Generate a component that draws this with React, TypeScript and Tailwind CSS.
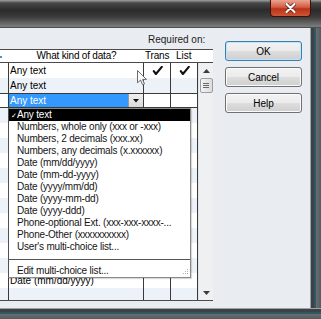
const items = [
  'Numbers, whole only (xxx or -xxx)',
  'Numbers, 2 decimals (xxx.xx)',
  'Numbers, any decimals (x.xxxxxx)',
  'Date (mm/dd/yyyy)',
  'Date (mm-dd-yyyy)',
  'Date (yyyy/mm/dd)',
  'Date (yyyy-mm-dd)',
  'Date (yyyy-ddd)',
  'Phone-optional Ext. (xxx-xxx-xxxx-...',
  'Phone-Other (xxxxxxxxxx)',
  "User's multi-choice list...",
]

// rows behind the popup list; index 14 is the one peeking out below it
const rowCount = 16

const Check = () => (
  <svg width="11" height="9" viewBox="0 0 11 9">
    <path d="M1.8 5.2 L3.9 8 L9.8 0.8" fill="none" stroke="#111" strokeWidth="2.1" strokeLinecap="round" strokeLinejoin="round" />
  </svg>
)

const Cursor = () => (
  <svg width="11" height="17" viewBox="0 0 11 17">
    <path d="M0.5 0.5 L0.5 12.8 L3.5 10 L5.6 14.8 L7.5 14 L5.5 9.4 L9.5 9.4 Z" fill="#fafafa" stroke="#6b6b6b" strokeWidth="1" strokeLinejoin="round" />
  </svg>
)

const Button = ({ label, primary }: { label: string; primary?: boolean }) => (
  <div
    className={
      'h-[20px] w-[77px] rounded-[3px] border flex items-center justify-center text-[10px] text-black bg-[linear-gradient(to_bottom,#f3f3f3_0%,#ebebeb_48%,#dddddd_52%,#cfcfcf_100%)] ' +
      (primary ? 'border-[#3c7fb1] shadow-[inset_0_0_0_1px_#bfe3f7]' : 'border-[#707070] shadow-[inset_0_0_0_1px_#fbfbfb]')
    }
  >
    {label}
  </div>
)

export default function App() {
  return (
    <div className="relative w-[321px] h-[319px] overflow-hidden flex flex-col font-['Liberation_Sans',Arial,sans-serif] text-black">
      {/* Title bar */}
      <div className="h-[28px] shrink-0 flex justify-end pr-[10px] border-b border-[#4a4f55] bg-[linear-gradient(to_bottom,#a0a0a0_0px,#474747_3px,#2b2b2b_10px,#3c3c3c_17px,#7e7e7e_27px)]">
        <div className="w-[41px] h-[17px] rounded-b-[4px] border border-t-0 border-[#3d1209] flex items-center justify-center bg-[linear-gradient(to_bottom,#e9a591_0%,#d45c41_45%,#b9321b_55%,#cf5534_100%)]">
          <svg width="11" height="10" viewBox="0 0 11 10">
            <path d="M1.5 1 L9.5 9 M9.5 1 L1.5 9" stroke="#5a1a0e" strokeWidth="3.6" strokeLinecap="round" />
            <path d="M1.5 1 L9.5 9 M9.5 1 L1.5 9" stroke="#ffffff" strokeWidth="2.2" strokeLinecap="round" />
          </svg>
        </div>
      </div>

      <div className="flex flex-1 min-h-0">
        {/* Dialog body */}
        <div className="w-[310px] bg-[#e9ecf1] flex">
          <div className="w-[213px] flex flex-col">
            <div className="h-[21px] shrink-0 pl-[148px] pt-[6px] text-[10px] leading-[11px] text-[#1b1b1b]">Required on:</div>

            <div className="relative h-[252px] shrink-0 flex flex-col border-t border-b border-[#4a4a4a] bg-white">
              {/* header */}
              <div className="h-[13px] shrink-0 flex border-b border-[#4a4a4a] text-[10px] leading-[12px]">
                <div className="w-[9px] relative">
                  <div className="absolute left-0 top-[6px] w-[2px] h-[2px] bg-[#4a8fd8]" />
                </div>
                <div className="w-[135px] text-center tracking-[-0.2px]">What kind of data?</div>
                <div className="w-[27px] overflow-hidden whitespace-nowrap pl-[1px] tracking-[-0.2px]">Trans</div>
                <div className="w-[27px] pl-[5px]">List</div>
              </div>

              {/* rows + scrollbar */}
              <div className="flex flex-1 min-h-0">
                <div className="w-[198px] flex flex-col overflow-hidden">
                  {Array.from({ length: rowCount }).map((_, i) => {
                    const stripe = i % 2 === 1 ? 'bg-[#edf1f8]' : 'bg-white'
                    if (i === 2) {
                      return (
                        <div key={i} className="h-[15px] shrink-0 flex border-t border-b border-[#3a3a3a] bg-white">
                          <div className="w-[9px] border-r border-[#3a3a3a]" />
                          <div className="w-[135px] flex border-r border-[#3a3a3a]">
                            <div className="w-[119px] bg-[#3399ff] text-white text-[10px] leading-[13px] pl-[1px]">Any text</div>
                            <div className="w-[15px] flex items-center justify-center bg-[linear-gradient(to_bottom,#f0f0f0,#d9d9d9)] border-l border-[#9a9a9a]">
                              <svg width="6" height="4" viewBox="0 0 6 4"><path d="M0 0 H6 L3 3.5 Z" fill="#111" /></svg>
                            </div>
                          </div>
                          <div className="w-[27px] border-r border-[#3a3a3a]" />
                          <div className="w-[27px] border-r border-[#3a3a3a]" />
                        </div>
                      )
                    }
                    return (
                      <div key={i} className={'h-[15px] shrink-0 flex ' + stripe}>
                        <div className="w-[9px] border-r border-[#3a3a3a]" />
                        <div className="w-[135px] border-r border-[#3a3a3a] text-[10px] leading-[15px] pl-[1px] whitespace-nowrap overflow-hidden">
                          {i < 2 || i === 14 ? (i === 14 ? 'Date (mm/dd/yyyy)' : 'Any text') : ''}
                        </div>
                        <div className="w-[27px] border-r border-[#3a3a3a] flex items-center justify-center">{i === 0 && <Check />}</div>
                        <div className="w-[27px] border-r border-[#3a3a3a] flex items-center justify-center">{i === 0 && <Check />}</div>
                      </div>
                    )
                  })}
                </div>

                {/* scrollbar */}
                <div className="w-[15px] flex flex-col items-center bg-[#eff0f2] border-l border-[#e2e3e5]">
                  <div className="h-[15px] flex items-center justify-center">
                    <svg width="7" height="4" viewBox="0 0 7 4"><path d="M0 4 H7 L3.5 0 Z" fill="#3c3c3c" /></svg>
                  </div>
                  <div className="w-[13px] h-[15px] rounded-[2px] border border-[#9b9ea3] bg-[linear-gradient(to_right,#f4f4f4,#dcdcdc)] flex flex-col items-center justify-center gap-[1px]">
                    <div className="w-[6px] h-[1px] bg-[#6a6a6a]" />
                    <div className="w-[6px] h-[1px] bg-[#6a6a6a]" />
                    <div className="w-[6px] h-[1px] bg-[#6a6a6a]" />
                  </div>
                  <div className="flex-1" />
                  <div className="h-[14px] flex items-center justify-center">
                    <svg width="7" height="4" viewBox="0 0 7 4"><path d="M0 0 H7 L3.5 4 Z" fill="#3c3c3c" /></svg>
                  </div>
                </div>
              </div>

              {/* popup list */}
              <div className="absolute left-[8px] top-[58px] w-[183px] h-[170px] bg-white border border-[#8a8a8a] border-l-[#505050] shadow-[1px_1px_1px_rgba(0,0,0,0.15)] flex flex-col text-[10px] leading-[12px] tracking-[-0.2px]">
                <div className="h-[12px] shrink-0 bg-black text-white flex items-center">
                  <span className="w-[8px] pl-[2px] text-[7px] leading-[7px]">✓</span>
                  <span>Any text</span>
                </div>
                {items.map((t) => (
                  <div key={t} className="h-[12px] shrink-0 pl-[8px] whitespace-nowrap overflow-hidden text-[#141414]">
                    {t}
                  </div>
                ))}
                <div className="h-[12px] shrink-0 flex items-center">
                  <div className="h-[1px] w-full bg-[#555]" />
                </div>
                <div className="h-[12px] shrink-0 pl-[8px] whitespace-nowrap text-[#141414]">Edit multi-choice list...</div>
                <div className="absolute right-[1px] bottom-[1px]">
                  <svg width="7" height="7" viewBox="0 0 7 7" fill="#b4b4b4">
                    <rect x="5" y="0" width="1" height="1" />
                    <rect x="3" y="2" width="1" height="1" />
                    <rect x="5" y="2" width="1" height="1" />
                    <rect x="1" y="4" width="1" height="1" />
                    <rect x="3" y="4" width="1" height="1" />
                    <rect x="5" y="4" width="1" height="1" />
                  </svg>
                </div>
              </div>

              {/* mouse pointer */}
              <div className="absolute left-[137px] top-[20px]">
                <Cursor />
              </div>
            </div>
          </div>

          {/* buttons */}
          <div className="ml-[12px] pt-[13px] flex flex-col gap-[6px]">
            <Button label="OK" primary />
            <Button label="Cancel" />
            <Button label="Help" />
          </div>
        </div>

        {/* right frame */}
        <div className="w-[11px] bg-[linear-gradient(to_right,#9ea3a7_0px,#9ea3a7_1px,#3d4246_1px,#3d4246_4px,#2f5862_4px,#2f5862_6px,#687074_6px,#555b5f_11px)]" />
      </div>

      {/* bottom frame */}
      <div className="h-[11px] shrink-0 bg-[linear-gradient(to_bottom,#9ea3a7_0px,#9ea3a7_1px,#3d4246_1px,#3d4246_4px,#2f5862_4px,#2f5862_6px,#687074_6px,#555b5f_11px)]" />
    </div>
  )
}
